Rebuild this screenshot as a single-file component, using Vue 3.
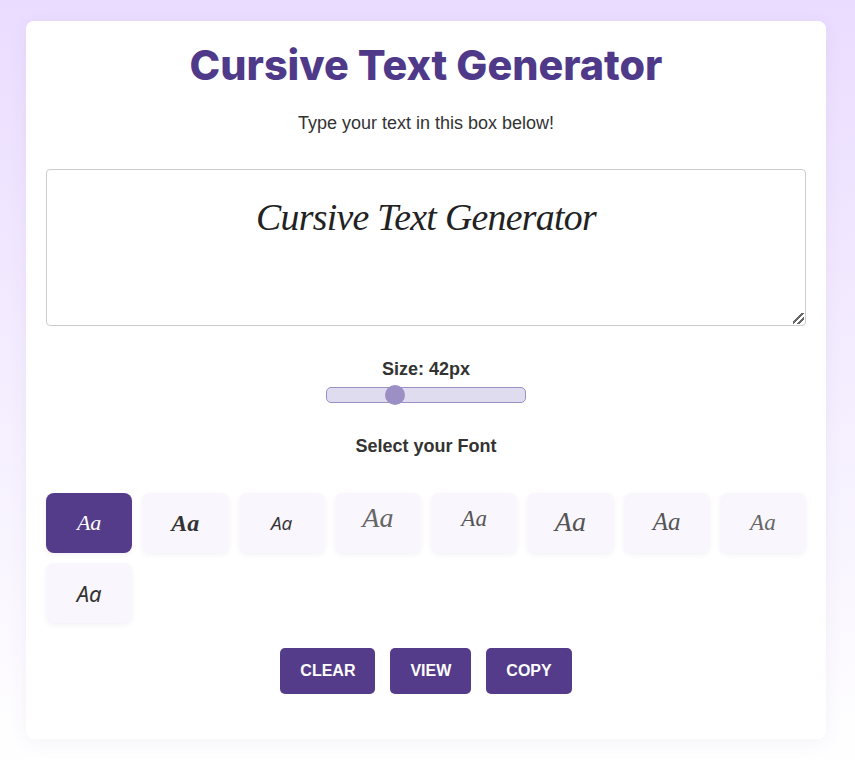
<script setup>
import { computed, ref } from "vue";

const text = ref("Cursive Text Generator");
const size = ref(42);
const selected = ref(0);

const editorSize = computed(() => size.value * 0.9 + "px");

const fonts = ["dancing", "heavy", "sans", "swash", "tall", "wide", "flourish", "small", "brush"];

const clearText = () => {
  text.value = "";
};

const copyText = () => {
  navigator.clipboard?.writeText(text.value);
};
</script>

<template>
  <div class="card">
    <h1>Cursive Text Generator</h1>
    <p class="intro">Type your text in this box below!</p>

    <textarea v-model="text" class="editor" :style="{ fontSize: editorSize }"></textarea>

    <div class="size-control">
      <label for="size">Size: {{ size }}px</label>
      <input id="size" v-model.number="size" type="range" min="16" max="96" />
    </div>

    <h2>Select your Font</h2>

    <div class="font-grid">
      <button
        v-for="(font, index) in fonts"
        :key="font"
        class="font-btn"
        :class="[font, { active: selected === index }]"
        @click="selected = index"
      >
        Aa
      </button>
    </div>

    <div class="actions">
      <button class="action" @click="clearText">CLEAR</button>
      <button class="action">VIEW</button>
      <button class="action" @click="copyText">COPY</button>
    </div>
  </div>
</template>

<style scoped>
.card {
  box-sizing: border-box;
  width: 800px;
  height: 718px;
  margin-left: 26px;
  padding: 20px;
  background: #fff;
  border-radius: 8px;
  box-shadow: 0 4px 20px rgba(84, 60, 139, 0.06);
  text-align: center;
  color: #333;
  font-family: "Liberation Sans", Arial, sans-serif;
}

h1 {
  margin: 0;
  color: #4f3a8a;
  font-family: Inter, "Liberation Sans", sans-serif;
  font-size: 41.3px;
  font-weight: 800;
  line-height: 48px;
}

.intro {
  margin: 22px 0 0;
  font-size: 18px;
  line-height: 24px;
}

.editor {
  display: block;
  box-sizing: border-box;
  width: 100%;
  height: 157px;
  margin-top: 34px;
  padding: 17px 15px 15px;
  border: 1px solid #ccc;
  border-radius: 4px;
  outline: none;
  color: #222;
  font-family: "Liberation Serif", serif;
  font-style: italic;
  letter-spacing: -0.7px;
  line-height: 60px;
  text-align: center;
}

.editor::-webkit-resizer {
  background: linear-gradient(
      135deg,
      transparent 40%,
      #666 40%,
      #666 52%,
      transparent 52%,
      transparent 68%,
      #666 68%,
      #666 80%,
      transparent 80%
    )
    no-repeat right 1px bottom 1px / 11px 11px;
}

.size-control {
  display: flex;
  flex-direction: column;
  align-items: center;
  margin-top: 33px;
}

label {
  font-size: 18px;
  font-weight: 700;
  line-height: 20px;
}

input[type="range"] {
  box-sizing: border-box;
  width: 200px;
  height: 16px;
  margin: 8px 0 0;
  appearance: none;
  background: #e0dcf0;
  border: 1px solid #9b8fc4;
  border-radius: 5px;
}

input[type="range"]::-webkit-slider-thumb {
  appearance: none;
  width: 20px;
  height: 20px;
  border-radius: 50%;
  background: #9b8fc4;
}

h2 {
  margin: 32px 0 0;
  font-size: 18px;
  font-weight: 700;
  line-height: 22px;
}

.font-grid {
  display: grid;
  grid-template-columns: repeat(8, 1fr);
  gap: 10px;
  margin-top: 36px;
}

.font-btn {
  height: 60px;
  padding: 0;
  border: none;
  border-radius: 8px;
  background: #f9f7fd;
  box-shadow: 0 2px 5px rgba(84, 60, 139, 0.07);
  color: #333;
  font-family: "Liberation Serif", serif;
  font-size: 22px;
  font-style: italic;
}

.font-btn.active {
  background: #553c8b;
  color: #fff;
}

.font-btn.heavy {
  font-size: 24px;
  font-weight: 700;
}

.font-btn.sans {
  font-family: "Open Sans", sans-serif;
  font-size: 19px;
}

.font-btn.swash {
  padding-bottom: 10px;
  color: #666;
  font-size: 28px;
}

.font-btn.tall {
  padding-bottom: 8px;
  color: #555;
  font-size: 23px;
}

.font-btn.wide {
  padding-bottom: 2px;
  color: #555;
  font-size: 28px;
}

.font-btn.flourish {
  padding-bottom: 2px;
  color: #555;
  font-size: 25px;
}

.font-btn.small {
  color: #666;
  font-size: 23px;
}

.font-btn.brush {
  font-family: "Noto Sans", sans-serif;
  font-size: 22px;
}

.actions {
  display: flex;
  justify-content: center;
  gap: 15px;
  margin-top: 25px;
}

.action {
  height: 46px;
  padding: 0 20px;
  border: none;
  border-radius: 5px;
  background: #553c8b;
  color: #fff;
  font-family: "Liberation Sans", Arial, sans-serif;
  font-size: 16px;
  font-weight: 700;
}
</style>

<style>
body {
  min-height: 766px;
  padding-top: 21px;
  box-sizing: border-box;
  background: linear-gradient(#eadcff, #ffffff);
}
</style>
